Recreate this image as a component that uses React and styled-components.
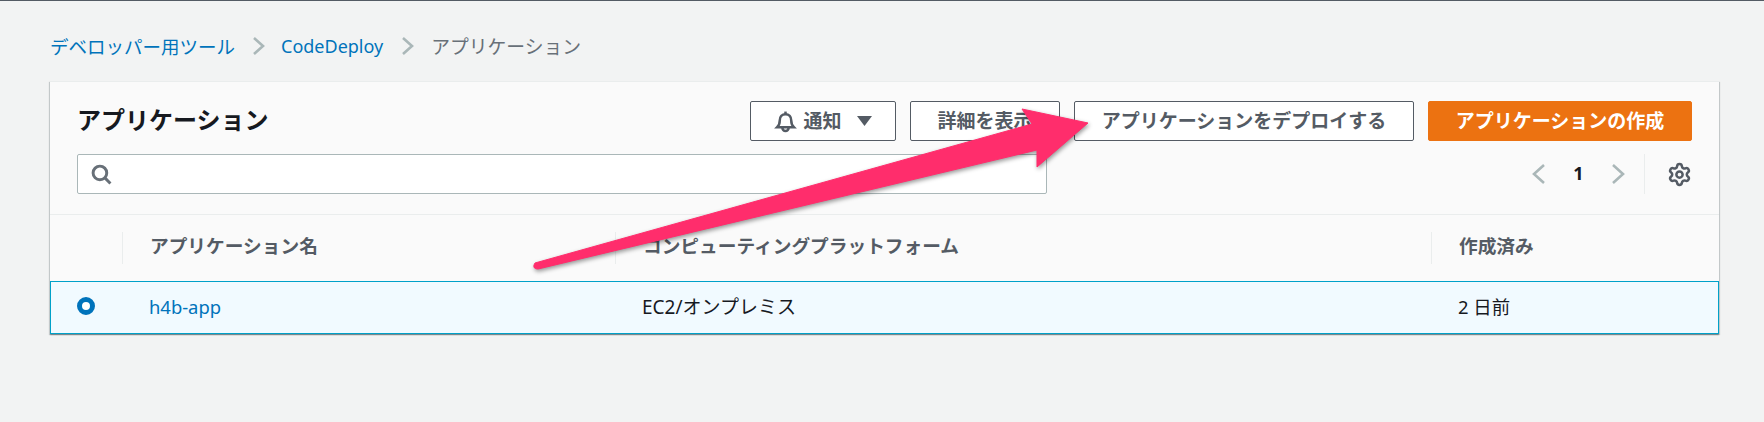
import React from "react";
import styled, { createGlobalStyle } from "styled-components";

const Global = createGlobalStyle`
  html, body { margin: 0; padding: 0; }
  body {
    background: #f2f3f3;
    font-family: "Noto Sans", "Noto Sans CJK JP", sans-serif;
    font-size: 18px;
    color: #16191f;
  }
`;

const Page = styled.div`
  position: relative;
  width: 1764px;
  height: 422px;
  box-sizing: border-box;
  border-top: 1px solid #545b64;
  padding: 0 45px 0 50px;
  overflow: hidden;
`;

const Crumbs = styled.nav`
  display: flex;
  align-items: center;
  height: 30px;
  margin-top: 30px;
  margin-bottom: 20px;
  font-size: 18.5px;
`;

const CrumbLink = styled.span`
  color: #0073bb;
  font-size: ${(p) => (p.$latin ? "18px" : "inherit")};
`;

const CrumbCurrent = styled.span`
  color: #687078;
  font-size: 18.8px;
`;

const CrumbSep = styled.svg`
  width: 16px;
  height: 20px;
  margin: 0 ${(p) => p.$after || 14}px 0 ${(p) => p.$before || 16}px;
  fill: none;
  stroke: #aab7b8;
  stroke-width: 2.6;
`;

const Card = styled.section`
  background: #fafafa;
  box-shadow: 0 1px 1px 0 rgba(0, 28, 36, 0.3), 1px 1px 1px 0 rgba(0, 28, 36, 0.15), -1px 1px 1px 0 rgba(0, 28, 36, 0.15);
`;

const CardHeader = styled.header`
  padding: 19px 27px 20px 27px;
  border-bottom: 1px solid #eaeded;
  border-top: 1px solid #eaeded;
`;

const TopRow = styled.div`
  display: flex;
  align-items: center;
  justify-content: space-between;
  height: 40px;
`;

const Title = styled.h1`
  margin: 0;
  padding-bottom: 5px;
  font-size: 24px;
  font-weight: 700;
  color: #16191f;
`;

const Actions = styled.div`
  display: flex;
  gap: 14px;
`;

const Button = styled.button`
  display: flex;
  align-items: center;
  justify-content: center;
  gap: 6px;
  height: 40px;
  width: ${(p) => p.$w}px;
  box-sizing: border-box;
  padding: 0 0 3px;
  border: 1px solid ${(p) => (p.$primary ? "#ec7211" : "#545b64")};
  border-radius: 2px;
  background: ${(p) => (p.$primary ? "#ec7211" : "#ffffff")};
  color: ${(p) => (p.$primary ? "#ffffff" : "#545b64")};
  font-family: inherit;
  font-size: 19px;
  font-weight: 700;
`;

const Caret = styled.svg`
  width: 15px;
  height: 12px;
  margin-left: 9px;
  margin-top: 3px;
  fill: #545b64;
`;

const BellIcon = styled.svg`
  width: 23px;
  height: 23px;
  margin-top: 3px;
  fill: none;
  stroke: #545b64;
  stroke-width: 2.4;
`;

const SecondRow = styled.div`
  display: flex;
  align-items: center;
  margin-top: 13px;
  height: 40px;
`;

const Search = styled.div`
  display: flex;
  align-items: center;
  width: 970px;
  height: 40px;
  box-sizing: border-box;
  padding-left: 13px;
  background: #ffffff;
  border: 1px solid #aab7b8;
  border-radius: 2px;
`;

const SearchIcon = styled.svg`
  width: 21px;
  height: 21px;
  fill: none;
  stroke: #687078;
  stroke-width: 2.8;
`;

const Pager = styled.div`
  display: flex;
  align-items: center;
  height: 40px;
  margin-left: auto;
`;

const PagerChevron = styled.svg`
  width: 14px;
  height: 22px;
  fill: none;
  stroke: #aab7b8;
  stroke-width: 2.6;
`;

const PageNum = styled.span`
  width: 65px;
  padding-bottom: 2px;
  text-align: center;
  font-size: 18px;
  font-weight: 700;
  color: #16191f;
`;

const PagerDivider = styled.span`
  width: 1px;
  height: 40px;
  margin: 0 22px 0 19px;
  background: #eaeded;
`;

const GearIcon = styled.svg`
  width: 25px;
  height: 25px;
  fill: none;
  stroke: #545b64;
  stroke-width: 2.4;
`;

const GRID = "72px 493px 816px 1fr";

const HeadRow = styled.div`
  display: grid;
  grid-template-columns: ${GRID};
  align-items: center;
  height: 66px;
`;

const HeadCell = styled.div`
  height: 32px;
  line-height: 28px;
  padding-left: 27px;
  border-left: ${(p) => (p.$first ? "none" : "1px solid #eaeded")};
  font-size: 18.7px;
  font-weight: 700;
  color: #545b64;
`;

const BodyRow = styled.div`
  display: grid;
  grid-template-columns: ${GRID};
  align-items: center;
  height: 53px;
  background: #f1faff;
  box-shadow: inset 0 0 0 1px #00a1c9;
`;

const BodyCell = styled.div`
  padding-left: 27px;
  padding-bottom: 3px;
  font-size: ${(p) => p.$size || 18.4}px;
  color: #16191f;
`;

const RowLink = styled.span`
  color: #0073bb;
`;

const Radio = styled.span`
  display: block;
  width: 18px;
  height: 18px;
  margin-top: -1px;
  box-sizing: border-box;
  border-radius: 50%;
  border: 5.5px solid #0073bb;
  background: #ffffff;
`;

const ArrowOverlay = styled.svg`
  position: absolute;
  left: 0;
  top: 0;
  width: 1764px;
  height: 422px;
  pointer-events: none;
  filter: drop-shadow(1px 2px 2px rgba(0, 0, 0, 0.4));
`;

export default function App() {
  return (
    <>
      <Global />
      <Page>
        <Crumbs>
          <CrumbLink>デベロッパー用ツール</CrumbLink>
          <CrumbSep viewBox="0 0 16 20"><polyline points="3,2 12,10 3,18" /></CrumbSep>
          <CrumbLink $latin>CodeDeploy</CrumbLink>
          <CrumbSep viewBox="0 0 16 20" $before={17} $after={15}><polyline points="3,2 12,10 3,18" /></CrumbSep>
          <CrumbCurrent>アプリケーション</CrumbCurrent>
        </Crumbs>
        <Card>
          <CardHeader>
            <TopRow>
              <Title>アプリケーション</Title>
              <Actions>
                <Button $w={146}>
                  <BellIcon viewBox="0 0 22 22">
                    <path d="M3 16.5 c2-2 2.5-3 2.5-6.5 c0-3.5 2.2-6 5.5-6 s5.5 2.5 5.5 6 c0 3.5 .5 4.5 2.5 6.5 z" />
                    <path d="M8 17 a3 3 0 0 0 6 0" />
                    <line x1="11" y1="1.5" x2="11" y2="4" />
                  </BellIcon>
                  通知
                  <Caret viewBox="0 0 15 12"><polygon points="0,1 15,1 7.5,11" /></Caret>
                </Button>
                <Button $w={150}>詳細を表示</Button>
                <Button $w={340}>アプリケーションをデプロイする</Button>
                <Button $w={264} $primary>アプリケーションの作成</Button>
              </Actions>
            </TopRow>
            <SecondRow>
              <Search>
                <SearchIcon viewBox="0 0 20 20">
                  <circle cx="8.5" cy="8.5" r="6.5" />
                  <line x1="13" y1="13" x2="18.5" y2="18.5" />
                </SearchIcon>
              </Search>
              <Pager>
                <PagerChevron viewBox="0 0 14 22"><polyline points="12,2 2,11 12,20" /></PagerChevron>
                <PageNum>1</PageNum>
                <PagerChevron viewBox="0 0 14 22"><polyline points="2,2 12,11 2,20" /></PagerChevron>
                <PagerDivider />
                <GearIcon viewBox="0 0 24 24">
                  <path d="M9.671 4.136a2.34 2.34 0 0 1 4.659 0 2.34 2.34 0 0 0 3.319 1.915 2.34 2.34 0 0 1 2.33 4.033 2.34 2.34 0 0 0 0 3.831 2.34 2.34 0 0 1-2.33 4.033 2.34 2.34 0 0 0-3.319 1.915 2.34 2.34 0 0 1-4.659 0 2.34 2.34 0 0 0-3.32-1.915 2.34 2.34 0 0 1-2.33-4.033 2.34 2.34 0 0 0 0-3.831A2.34 2.34 0 0 1 6.35 6.051a2.34 2.34 0 0 0 3.319-1.915" />
                  <circle cx="12" cy="12" r="3" />
                </GearIcon>
              </Pager>
            </SecondRow>
          </CardHeader>
          <HeadRow>
            <HeadCell $first />
            <HeadCell>アプリケーション名</HeadCell>
            <HeadCell>コンピューティングプラットフォーム</HeadCell>
            <HeadCell>作成済み</HeadCell>
          </HeadRow>
          <BodyRow>
            <BodyCell><Radio /></BodyCell>
            <BodyCell><RowLink>h4b-app</RowLink></BodyCell>
            <BodyCell $size={19}>EC2/オンプレミス</BodyCell>
            <BodyCell $size={18.4}>2 日前</BodyCell>
          </BodyRow>
        </Card>
        <ArrowOverlay viewBox="0 0 1764 422">
          <path
            d="M535 262 L1032 123 L1022 108 L1088 122 L1037 166 L1037 149 L538 268 Q533 268 534 264 Z"
            fill="#ff2d6c"
            stroke="#ff2d6c"
            strokeWidth="1"
            strokeLinejoin="round"
          />
        </ArrowOverlay>
      </Page>
    </>
  );
}
